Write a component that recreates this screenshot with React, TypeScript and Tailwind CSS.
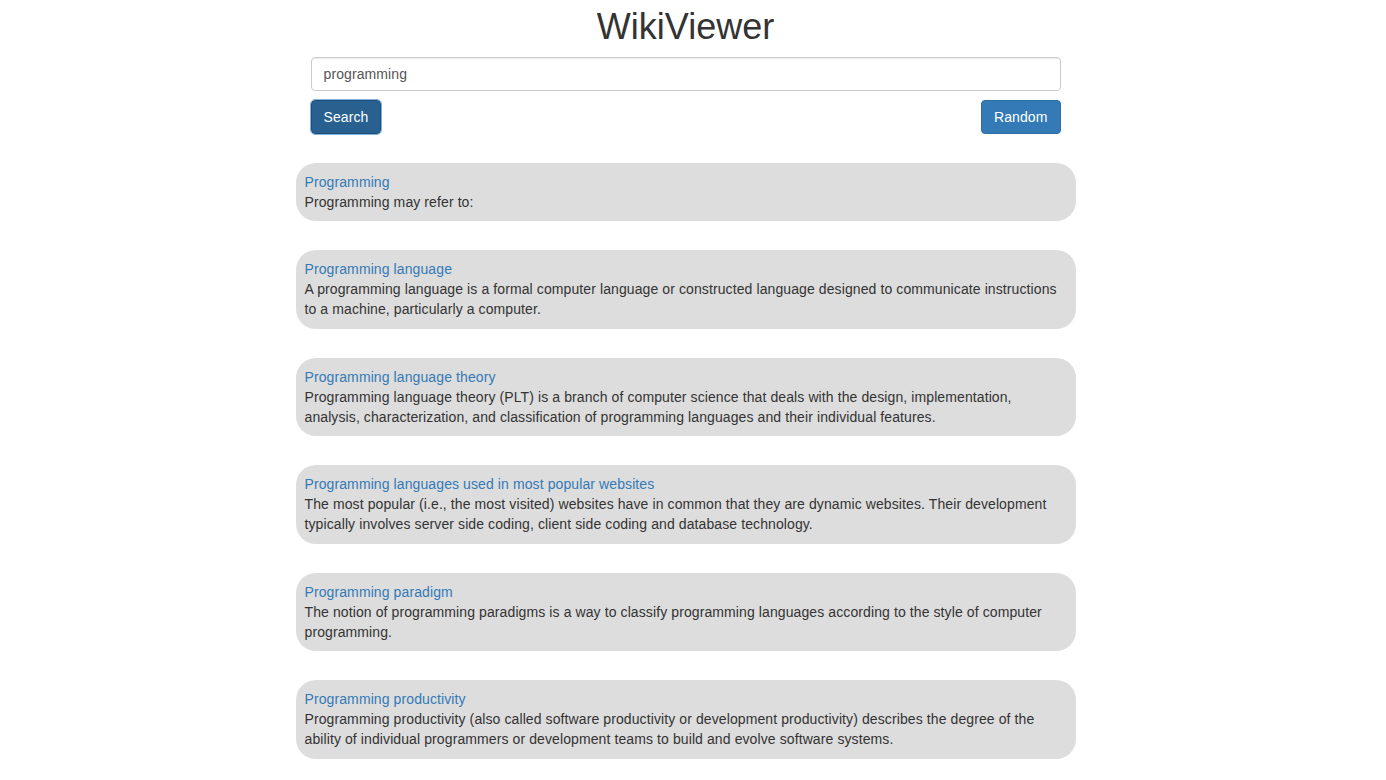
import { useState } from "react";

type Result = { title: string; extract: string };

const results: Result[] = [
  { title: "Programming", extract: "Programming may refer to:" },
  {
    title: "Programming language",
    extract:
      "A programming language is a formal computer language or constructed language designed to communicate instructions to a machine, particularly a computer.",
  },
  {
    title: "Programming language theory",
    extract:
      "Programming language theory (PLT) is a branch of computer science that deals with the design, implementation, analysis, characterization, and classification of programming languages and their individual features.",
  },
  {
    title: "Programming languages used in most popular websites",
    extract:
      "The most popular (i.e., the most visited) websites have in common that they are dynamic websites. Their development typically involves server side coding, client side coding and database technology.",
  },
  {
    title: "Programming paradigm",
    extract:
      "The notion of programming paradigms is a way to classify programming languages according to the style of computer programming.",
  },
  {
    title: "Programming productivity",
    extract:
      "Programming productivity (also called software productivity or development productivity) describes the degree of the ability of individual programmers or development teams to build and evolve software systems.",
  },
];

export default function App() {
  const [query, setQuery] = useState("programming");

  return (
    <div
      className="min-h-screen bg-white pr-[15px] text-[14px] leading-[20px] text-[#333]"
      style={{ fontFamily: '"Liberation Sans", Arial, Helvetica, sans-serif' }}
    >
      <div className="mx-auto w-[780px]">
        <h1 className="mt-[7px] mb-[10px] text-center text-[36px] leading-[1.1] font-normal text-[#333]">
          WikiViewer
        </h1>

        <div className="mx-auto w-[750px]">
          <input
            className="block h-[34px] w-full rounded-[4px] border border-[#ccc] bg-white px-[12px] py-[6px] text-[14px] tracking-[0.1px] text-[#555] shadow-[inset_0_1px_1px_rgba(0,0,0,0.075)] outline-none"
            value={query}
            onChange={(e) => setQuery(e.target.value)}
          />
          <div className="mt-[9px] flex items-center justify-between">
            <button
              type="button"
              className="h-[34px] rounded-[4px] border border-[#204d74] bg-[#286090] px-[12px] text-[14px] tracking-[0.1px] text-white outline outline-[1.5px] outline-offset-0 outline-[#82b3e3]"
            >
              Search
            </button>
            <button
              type="button"
              className="h-[34px] rounded-[4px] border border-[#2e6da4] bg-[#337ab7] px-[12px] text-[14px] tracking-[0.1px] text-white"
            >
              Random
            </button>
          </div>
        </div>

        <div className="mt-[29px] flex flex-col gap-[29px] pb-[20px] tracking-[0.1px]">
          {results.map((r) => (
            <div key={r.title} className="rounded-[20px] bg-[#dddddd] px-[9px] pt-[9px] pb-[9.5px]">
              <a href="#" className="block text-[#337ab7] no-underline">
                {r.title}
              </a>
              <p className="m-0">{r.extract}</p>
            </div>
          ))}
        </div>
      </div>
    </div>
  );
}
